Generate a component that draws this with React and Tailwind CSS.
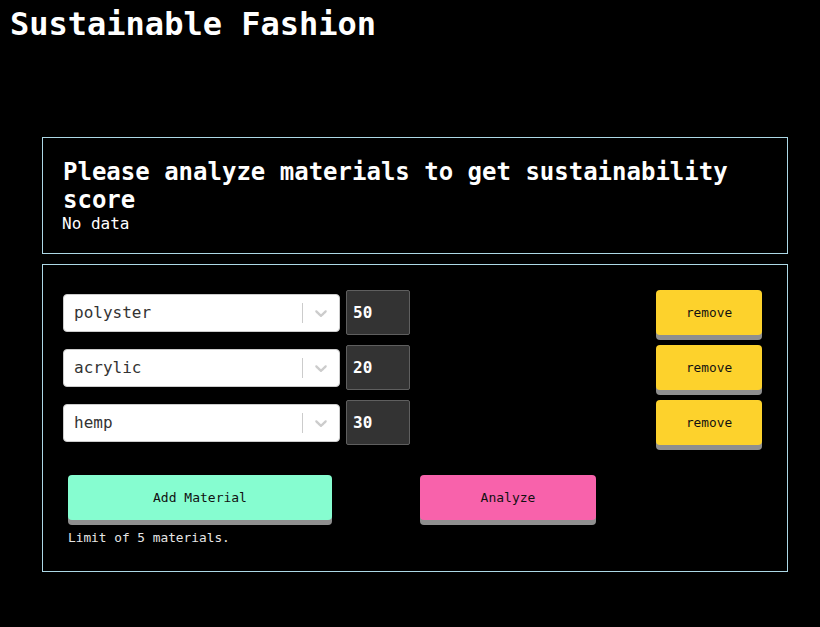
import React from "react";

const mono = { fontFamily: '"DejaVu Sans Mono", monospace' };

function Chevron() {
  return (
    <svg width="20" height="20" viewBox="0 0 20 20" fill="#cccccc" aria-hidden="true">
      <path d="M4.516 7.548c0.436-0.446 1.043-0.481 1.576 0l3.908 3.747 3.908-3.747c0.533-0.481 1.141-0.446 1.574 0 0.436 0.445 0.408 1.197 0 1.615-0.406 0.418-4.695 4.502-4.695 4.502-0.217 0.223-0.502 0.335-0.787 0.335s-0.57-0.112-0.789-0.335c0 0-4.287-4.084-4.695-4.502s-0.436-1.17 0-1.615z" />
    </svg>
  );
}

function Row({ name, value }) {
  return (
    <div className="flex items-center h-[45px]">
      <div className="flex items-center w-[277px] h-[38px] bg-white border border-[#cccccc] rounded-[4px]">
        <div className="flex-1 pl-[10px] text-[16px] text-[#333333]">{name}</div>
        <div className="w-px h-[20px] bg-[#cccccc]" />
        <div className="px-[8px] flex items-center">
          <Chevron />
        </div>
      </div>
      <div className="ml-[6px] w-[64px] h-[45px] bg-[#333333] border border-[#5f5f5f] rounded-[2px] flex items-center pl-[6px] text-white font-bold text-[16px]">
        {value}
      </div>
      <div className="flex-1" />
      <button className="mr-[5px] w-[106px] h-[45px] bg-[#fdd22c] rounded-[4px] shadow-[0_5px_0_#8f8f8f] text-[12.8px] text-[#111]">
        remove
      </button>
    </div>
  );
}

export default function App() {
  return (
    <div className="bg-black min-h-[627px] w-[820px] text-white" style={mono}>
      <h1 className="pl-[10px] text-[32px] leading-[48px] font-bold">Sustainable Fashion</h1>
      <div className="ml-[42px] mt-[89px] w-[746px] border border-[#add8e6] px-[20px] pt-[20px] pb-[19px]">
        <h2 className="text-[24px] leading-[28px] font-bold">
          Please analyze materials to get sustainability score
        </h2>
        <div className="text-[16px] leading-[20px] -ml-px">No data</div>
      </div>
      <div className="ml-[42px] mt-[10px] w-[746px] h-[308px] border border-[#add8e6] px-[20px] pt-[25px]">
        <div className="flex flex-col gap-[10px]">
          <Row name="polyster" value="50" />
          <Row name="acrylic" value="20" />
          <Row name="hemp" value="30" />
        </div>
        <div className="grid grid-cols-2 mt-[30px]">
          <div className="pl-[5px]">
            <button className="w-[264px] h-[45px] bg-[#86fdd0] rounded-[4px] shadow-[0_5px_0_#8f8f8f] text-[13px] text-[#111]">
              Add Material
            </button>
            <div className="mt-[10px] text-[12.8px] leading-[16px] text-[#e6e6e6]">Limit of 5 materials.</div>
          </div>
          <div className="pl-[5px]">
            <button className="w-[176px] h-[45px] bg-[#f862ab] rounded-[4px] shadow-[0_5px_0_#8f8f8f] text-[13px] text-[#111]">
              Analyze
            </button>
          </div>
        </div>
      </div>
    </div>
  );
}
